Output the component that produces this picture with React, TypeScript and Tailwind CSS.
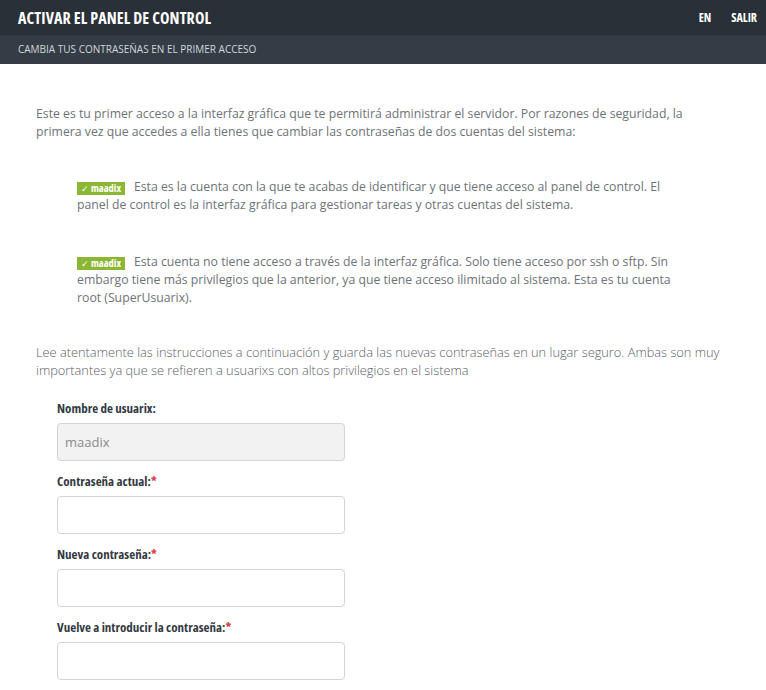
const sans = "font-['Open_Sans',sans-serif]"
const cond = "font-['Open_Sans',sans-serif] [font-stretch:75%]"

function Badge() {
  return (
    <span className={`${cond} inline-flex items-center gap-[2px] bg-[#8cb735] text-white text-[10.5px] font-bold leading-[13px] h-[13px] px-[4px] mr-[9px] align-[-1px]`}>
      <span className="font-normal text-[9px] leading-[13px]">✓</span>
      <span>maadix</span>
    </span>
  )
}

function Field({ label, value, required, disabled }: { label: string; value?: string; required?: boolean; disabled?: boolean }) {
  return (
    <div className="flex flex-col">
      <label className={`${cond} text-[13px] font-bold text-[#333a42] leading-[18px] mb-[6px]`}>
        {label}
        {required && <span className="text-[#e0393e]">*</span>}
      </label>
      <input
        readOnly
        value={value ?? ''}
        disabled={disabled}
        className={`${sans} w-[288px] h-[38px] rounded-[4px] border border-[#d4d4d4] px-[7px] text-[13px] text-[#8a8a8a] ${disabled ? 'bg-[#f2f2f2]' : 'bg-white'}`}
      />
    </div>
  )
}

export default function App() {
  return (
    <div className="min-h-[690px] bg-white">
      {/* Top bar */}
      <header className="bg-[#2a3038] h-[35px] flex items-center justify-between pl-[18px] pr-[9px]">
        <h1 className={`${cond} text-white text-[16px] font-bold tracking-[0.1px]`}>ACTIVAR EL PANEL DE CONTROL</h1>
        <nav className={`${cond} flex items-center gap-[20px] text-white text-[12px] font-bold`}>
          <a>EN</a>
          <a>SALIR</a>
        </nav>
      </header>
      <div className="bg-[#343c46] h-[29px] flex items-center pl-[18px]">
        <span className={`${sans} text-[#d2d6da] text-[10px] tracking-[0px]`}>CAMBIA TUS CONTRASEÑAS EN EL PRIMER ACCESO</span>
      </div>

      <main className={`${sans} text-[12.25px] leading-[18px] text-[#6d7278] pl-[36px] pr-[36px] pt-[41px]`}>
        <p>
          Este es tu primer acceso a la interfaz gráfica que te permitirá administrar el servidor. Por razones de seguridad, la primera vez que accedes a ella tienes que cambiar las contraseñas de dos cuentas del sistema:
        </p>

        <ul className="mt-[37px] pl-[41px] pr-[50px] flex flex-col gap-[39px]">
          <li>
            <Badge />
            Esta es la cuenta con la que te acabas de identificar y que tiene acceso al panel de control. El panel de control es la interfaz gráfica para gestionar tareas y otras cuentas del sistema.
          </li>
          <li>
            <Badge />
            Esta cuenta no tiene acceso a través de la interfaz gráfica. Solo tiene acceso por ssh o sftp. Sin embargo tiene más privilegios que la anterior, ya que tiene acceso ilimitado al sistema. Esta es tu cuenta root (SuperUsuarix).
          </li>
        </ul>

        <p className="font-light text-[12.8px] text-[#5a6066] mt-[36px]">
          Lee atentamente las instrucciones a continuación y guarda las nuevas contraseñas en un lugar seguro. Ambas son muy importantes ya que se refieren a usuarixs con altos privilegios en el sistema
        </p>

        <form className="mt-[20px] pl-[21px] flex flex-col gap-[11px]">
          <Field label="Nombre de usuarix:" value="maadix" disabled />
          <Field label="Contraseña actual:" required />
          <Field label="Nueva contraseña:" required />
          <Field label="Vuelve a introducir la contraseña:" required />
        </form>
      </main>
    </div>
  )
}
